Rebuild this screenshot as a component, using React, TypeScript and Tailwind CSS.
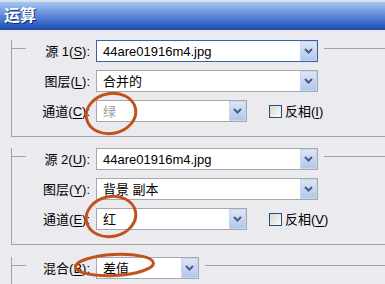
import React from 'react';
import clsx from 'clsx';

const font = { fontFamily: '"Liberation Sans", "Noto Sans CJK SC", sans-serif' };

function Chevron() {
  return (
    <svg width="9" height="6" viewBox="0 0 9 6">
      <path d="M1 1 L4.5 4.5 L8 1" fill="none" stroke="#4a5d80" strokeWidth="2" />
    </svg>
  );
}

function Combo({ className, text, focused, muted }: { className: string; text: string; focused?: boolean; muted?: boolean }) {
  return (
    <div className={clsx('flex h-[22px] bg-white border', focused ? 'border-[#3b5ea6]' : 'border-[#a8a8ac]', className)}>
      <div className={clsx('flex-1 flex items-center pl-[6px] text-[13px] leading-none', muted ? 'text-[#9b9b9b]' : 'text-black')}>
        {text}
      </div>
      <div className="w-[17px] h-full flex items-center justify-center border border-[#c8d6ee] bg-gradient-to-b from-[#dbe5f7] to-[#b2c7ec]">
        <Chevron />
      </div>
    </div>
  );
}

function Label({ name, k }: { name: string; k: string }) {
  return (
    <div className="w-[64px] text-right text-[13px] text-black leading-none whitespace-nowrap">
      {name}(<span className="underline underline-offset-2">{k}</span>):
    </div>
  );
}

function Check({ text, k }: { text: string; k: string }) {
  return (
    <div className="flex items-center ml-[16px] gap-[3px] text-[13px] leading-none text-black">
      <div className="w-[13px] h-[13px] border border-[#1c5180] bg-gradient-to-br from-[#d8d8d2] to-[#fbfbf8]" />
      <span>
        {text}(<span className="underline underline-offset-2">{k}</span>)
      </span>
    </div>
  );
}

function Group({ head, rows }: { head: React.ReactNode; rows?: React.ReactNode }) {
  return (
    <div className={clsx('ml-[11px] border-l border-[#a3a3a7]', rows && 'border-b pb-[14px]')}>
      <div className="-mt-[8px] flex items-start">
        <div className="-ml-px w-[15px] h-px mt-[8px] bg-[#a3a3a7]" />
        {head}
        <div className="flex-1 h-px mt-[8px] ml-[6px] bg-[#a3a3a7]" />
      </div>
      {rows && <div className="flex flex-col gap-[8px] mt-[8px]">{rows}</div>}
    </div>
  );
}

function Row({ children }: { children: React.ReactNode }) {
  return <div className="flex items-center pl-[14px] gap-[6px]">{children}</div>;
}

export default function App() {
  return (
    <div className="relative w-[385px] h-[284px] overflow-hidden bg-[#ebeaef]" style={font}>
      <div className="h-[2px] bg-[#d6e0f0]" />
      <div className="h-[28px] flex items-center pl-[4px] bg-gradient-to-b from-[#a9c6f1] via-[#5a87d8] to-[#1e4aae]">
        <span className="text-white font-bold text-[16px] leading-none [text-shadow:1px_1px_0_#0b2a78]">运算</span>
      </div>

      <div className="mt-[18px]">
        <Group
          head={
            <div className="flex items-center gap-[6px]">
              <Label name="源 1" k="S" />
              <Combo className="w-[222px]" text="44are01916m4.jpg" focused />
            </div>
          }
          rows={
            <>
              <Row>
                <Label name="图层" k="L" />
                <Combo className="w-[222px]" text="合并的" />
              </Row>
              <Row>
                <Label name="通道" k="C" />
                <Combo className="w-[151px]" text="绿" muted />
                <Check text="反相" k="I" />
              </Row>
            </>
          }
        />
      </div>

      <div className="mt-[19px]">
        <Group
          head={
            <div className="flex items-center gap-[6px]">
              <Label name="源 2" k="U" />
              <Combo className="w-[222px]" text="44are01916m4.jpg" />
            </div>
          }
          rows={
            <>
              <Row>
                <Label name="图层" k="Y" />
                <Combo className="w-[222px]" text="背景 副本" />
              </Row>
              <Row>
                <Label name="通道" k="E" />
                <Combo className="w-[151px]" text="红" />
                <Check text="反相" k="V" />
              </Row>
            </>
          }
        />
      </div>

      <div className="mt-[20px]">
        <Group
          head={
            <div className="flex items-center gap-[6px]">
              <Label name="混合" k="B" />
              <Combo className="w-[103px]" text="差值" />
            </div>
          }
        />
        <div className="ml-[11px] h-[40px] border-l border-[#a3a3a7]" />
      </div>

      <svg className="absolute inset-0 pointer-events-none" width="385" height="284">
        <g fill="none" stroke="#c2521c" strokeWidth="3">
          <ellipse cx="111" cy="113.5" rx="25" ry="20" transform="rotate(-12 111 113.5)" />
          <ellipse cx="111" cy="216.5" rx="25" ry="20" transform="rotate(-12 111 216.5)" />
          <ellipse cx="114.5" cy="265" rx="39" ry="10.5" transform="rotate(-3 114.5 265)" />
        </g>
      </svg>
    </div>
  );
}
